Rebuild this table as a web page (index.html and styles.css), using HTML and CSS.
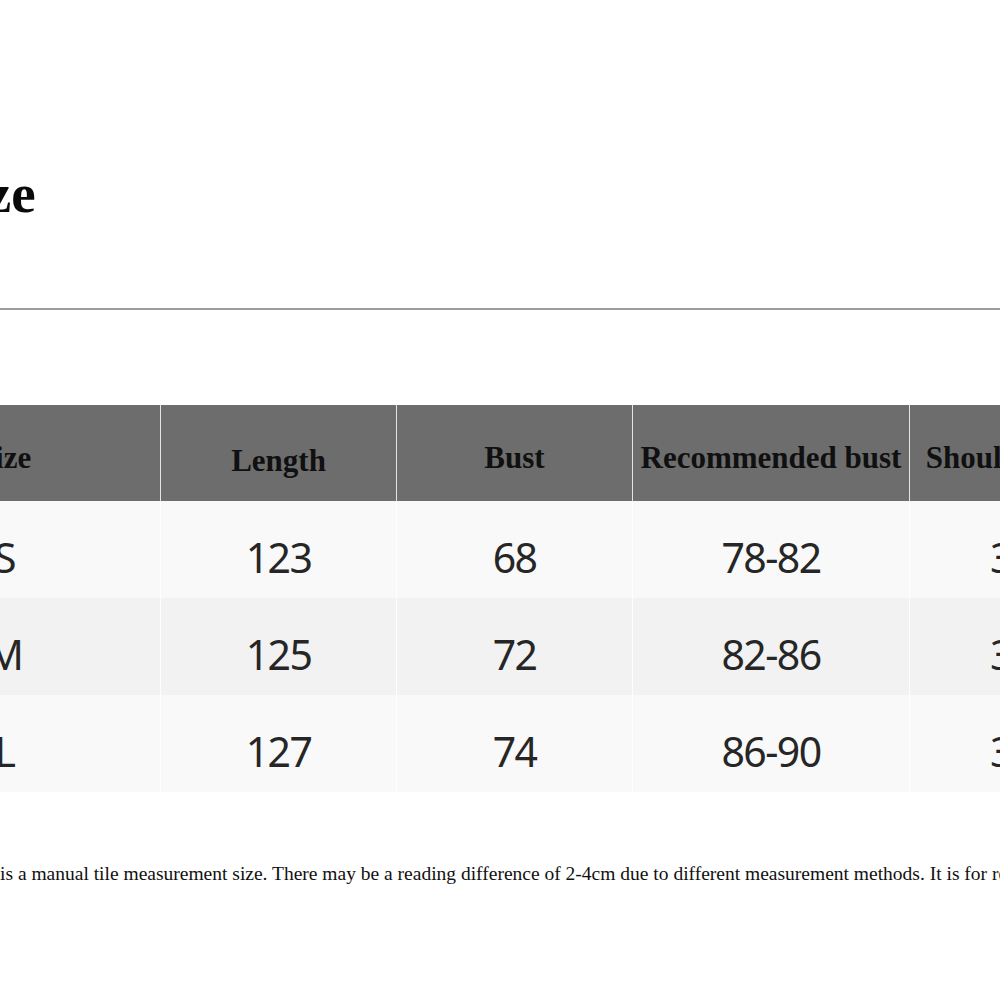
FILE: index.html
```html
<!DOCTYPE html>
<html lang="en">
<head>
<meta charset="utf-8">
<title>Size chart</title>
<link rel="stylesheet" href="styles.css">
</head>
<body>
<div class="sheet">
  <h1 class="title">Size</h1>
  <div class="rule"></div>
  <div class="chart">
    <div class="cell head">Size</div>
    <div class="cell head head-low">Length</div>
    <div class="cell head">Bust</div>
    <div class="cell head">Recommended bust</div>
    <div class="cell head">Shoulder width</div>

    <div class="cell odd">S</div>
    <div class="cell odd">123</div>
    <div class="cell odd">68</div>
    <div class="cell odd">78-82</div>
    <div class="cell odd">35.5</div>

    <div class="cell even">M</div>
    <div class="cell even">125</div>
    <div class="cell even">72</div>
    <div class="cell even">82-86</div>
    <div class="cell even">36.5</div>

    <div class="cell odd">L</div>
    <div class="cell odd">127</div>
    <div class="cell odd">74</div>
    <div class="cell odd">86-90</div>
    <div class="cell odd">37.5</div>
  </div>
  <p class="note">is a manual tile measurement size. There may be a reading difference of 2-4cm due to different measurement methods. It is for reference only.</p>
</div>
</body>
</html>
```

FILE: styles.css
```css
html, body {
  margin: 0;
  padding: 0;
  background: #ffffff;
  overflow: hidden;
}

.sheet {
  width: 1400px;
  margin-left: -151px;
  height: 1000px;
  font-family: "Liberation Serif", "Times New Roman", serif;
  color: #111111;
}

.title {
  margin: 0;
  padding: 166px 0 0 92px;
  height: 60px;
  font-size: 55px;
  line-height: 55px;
  font-weight: 700;
  color: #0a0a0a;
}

.rule {
  margin-top: 82px;
  height: 2px;
  background: #9c9c9c;
}

.chart {
  margin-top: 95px;
  display: grid;
  grid-template-columns: 312px 236px 236px 277px 236px;
  grid-auto-rows: 97px;
  grid-template-rows: 96px;
}

.cell {
  display: flex;
  align-items: center;
  justify-content: center;
  font-family: "Noto Sans", "Liberation Sans", sans-serif;
  font-size: 41px;
  letter-spacing: -1.6px;
  color: #262626;
  padding-top: 14px;
  box-sizing: border-box;
  border-right: 1px solid rgba(255, 255, 255, 0.85);
  white-space: nowrap;
}

.head {
  background: #6d6d6d;
  font-family: "Liberation Serif", "Times New Roman", serif;
  font-weight: 700;
  font-size: 31px;
  letter-spacing: 0;
  color: #101010;
  padding-top: 10px;
  border-right: 1px solid #e4e4e4;
}

.head-low {
  padding-top: 16px;
}

.odd {
  background: #f9f9f9;
}

.even {
  background: #f2f2f2;
}

.note {
  margin: 70px 0 0 151px;
  font-size: 19.5px;
  line-height: 24px;
  color: #111111;
  white-space: nowrap;
}
```
